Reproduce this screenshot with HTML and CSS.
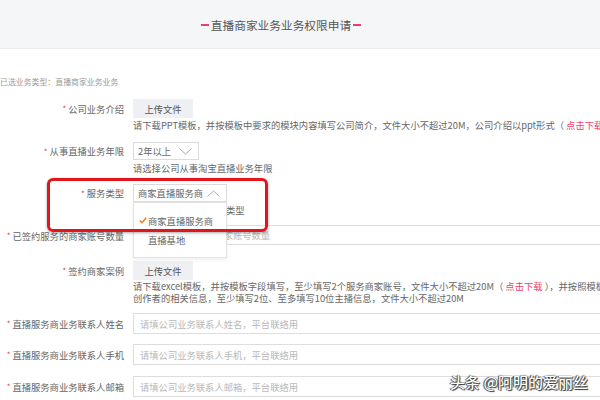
FILE: index.html
```html
<!DOCTYPE html>
<html lang="zh-CN">
<head>
    <meta charset="UTF-8">
    <meta name="viewport" content="width=device-width, initial-scale=1.0">
    <title>直播商家业务业务权限申请</title>
    <link rel="stylesheet" href="styles.css">
</head>
<body>

<div class="page">
    <div class="top">
        <h1 class="title"><span class="dash"></span>直播商家业务业务权限申请<span class="dash"></span></h1>
    </div>

    <p class="picked">已选业务类型：直播商家业务业务</p>

    <form class="form">
        <!-- 公司业务介绍 -->
        <div class="row row-intro">
            <label class="label"><i>*</i>公司业务介绍</label>
            <div class="field">
                <button type="button" class="upload">上传文件</button>
                <p class="tip">请下载PPT模板，并按模板中要求的模块内容填写公司简介，文件大小不超过20M，公司介绍以ppt形式（ <a class="link">点击下载</a> ）</p>
            </div>
        </div>

        <!-- 从事直播业务年限 -->
        <div class="row row-years">
            <label class="label"><i>*</i>从事直播业务年限</label>
            <div class="field">
                <div class="select select-years">
                    <span>2年以上</span>
                    <svg class="chev" width="13" height="7" viewBox="0 0 13 7"><polyline points="0.5,0.5 6.5,6 12.5,0.5" fill="none" stroke="#a8a8a8" stroke-width="1"/></svg>
                </div>
                <p class="tip">请选择公司从事淘宝直播业务年限</p>
            </div>
        </div>

        <!-- 服务类型 -->
        <div class="row row-type">
            <label class="label"><i>*</i>服务类型</label>
            <div class="field">
                <div class="select select-type">
                    <span>商家直播服务商</span>
                    <svg class="chev" width="13" height="7" viewBox="0 0 13 7"><polyline points="0.5,6.5 6.5,1 12.5,6.5" fill="none" stroke="#a8a8a8" stroke-width="1"/></svg>
                    <ul class="menu">
                        <li class="on">
                            <svg class="tick" width="8" height="7" viewBox="0 0 8 7"><polyline points="0.8,3.6 3,5.8 7.2,0.8" fill="none" stroke="#f5761a" stroke-width="1.4"/></svg>商家直播服务商
                        </li>
                        <li>直播基地</li>
                    </ul>
                </div>
                <p class="tip">请选择公司申请的服务类型</p>
            </div>
        </div>

        <!-- 已签约服务的商家账号数量 -->
        <div class="row row-count">
            <label class="label"><i>*</i>已签约服务的商家账号数量</label>
            <div class="field">
                <input class="input" type="text" placeholder="请填写签约服务的商家账号数量">
            </div>
        </div>

        <!-- 签约商家案例 -->
        <div class="row row-case">
            <label class="label"><i>*</i>签约商家案例</label>
            <div class="field">
                <button type="button" class="upload">上传文件</button>
                <p class="tip">请下载excel模板，并按模板字段填写，至少填写2个服务商家账号，文件大小不超过20M（ <a class="link">点击下载</a> ），并按照模板填写签约<br>创作者的相关信息，至少填写2位、至多填写10位主播信息，文件大小不超过20M</p>
            </div>
        </div>

        <div class="row row-name">
            <label class="label"><i>*</i>直播服务商业务联系人姓名</label>
            <div class="field">
                <input class="input" type="text" placeholder="请填公司业务联系人姓名，平台联络用">
            </div>
        </div>

        <div class="row row-phone">
            <label class="label"><i>*</i>直播服务商业务联系人手机</label>
            <div class="field">
                <input class="input" type="text" placeholder="请填公司业务联系人手机，平台联络用">
            </div>
        </div>

        <div class="row row-mail">
            <label class="label"><i>*</i>直播服务商业务联系人邮箱</label>
            <div class="field">
                <input class="input" type="text" placeholder="请填公司业务联系人邮箱，平台联络用">
            </div>
        </div>
    </form>

    <!-- 红框标注 -->
    <div class="mark"></div>

    <div class="watermark">头条 @阿明的爱丽丝</div>
</div>

</body>
</html>
```

FILE: styles.css
```css
html, body {
    margin: 0;
    padding: 0;
    background: #fff;
    overflow: hidden;
}
body {
    font-family: "Noto Sans CJK SC", "Microsoft YaHei", sans-serif;
    color: #666;
}
.page {
    position: relative;
    width: 600px;
    height: 400px;
    overflow: hidden;
}

/* 顶部标题 */
.top {
    height: 48px;
    background: #f5f6f8;
    border-bottom: 1px solid #ececec;
    display: flex;
    align-items: center;
    justify-content: center;
    padding-right: 38px;
}
.title {
    margin: 0;
    font-size: 11.7px;
    font-weight: normal;
    color: #555;
    display: flex;
    align-items: center;
    padding-top: 1px;
}
.dash {
    display: inline-block;
    width: 8px;
    height: 2px;
    background: #ec3e6d;
    margin: 0 2px;
}

.picked {
    margin: 27px 0 0 0;
    font-size: 7.9px;
    line-height: 12px;
    color: #999;
    white-space: nowrap;
}

/* 表单 */
.form {
    margin: 0;
}
.row {
    display: grid;
    grid-template-columns: 124px 480px;
    column-gap: 9px;
    align-items: start;
}
.row-intro { margin-top: 11px; }
.row-years { margin-top: 11px; }
.row-type { margin-top: 10px; }
.row-count { margin-top: 9px; }
.row-case { margin-top: 15px; }
.row-name { margin-top: 9px; }
.row-phone { margin-top: 10px; }
.row-mail { margin-top: 11px; }

.label {
    height: 19px;
    display: flex;
    align-items: center;
    justify-content: flex-end;
    white-space: nowrap;
    font-size: 9.3px;
    color: #666;
}
.label i {
    font-style: normal;
    color: #e4393c;
    font-size: 8px;
    margin-right: 2px;
}
.row-count .label,
.row-name .label,
.row-phone .label,
.row-mail .label {
    height: 21px;
}
.row-years .label,
.row-type .label {
    height: 18px;
}

.field {
    position: relative;
}
.upload {
    display: block;
    width: 60px;
    height: 19px;
    border: none;
    background: #eef0f3;
    font-family: inherit;
    font-size: 9.3px;
    color: #555;
    padding: 0;
}
.tip {
    margin: 0;
    font-size: 9.3px;
    line-height: 12px;
    color: #666;
    white-space: nowrap;
}
.row-intro .tip { margin-top: 1px; }
.row-years .tip,
.row-type .tip { margin-top: 2px; }
.row-case .tip { margin-top: 0; }
.link {
    color: #f0416e;
}

.select {
    position: relative;
    box-sizing: border-box;
    height: 18px;
    border: 1px solid #dcdcdc;
    display: flex;
    align-items: center;
    justify-content: space-between;
    padding: 0 6px 0 4px;
    font-size: 9.3px;
    color: #666;
    background: #fff;
}
.select-years { width: 66px; }
.select-type { width: 94px; }
.chev {
    display: block;
}

.menu {
    position: absolute;
    top: 17px;
    left: -1px;
    width: 94px;
    height: 56px;
    box-sizing: border-box;
    margin: 0;
    padding: 8px 0 0 0;
    list-style: none;
    background: #fff;
    border: 1px solid #e2e2e2;
    box-shadow: 0 2px 4px rgba(0, 0, 0, 0.06);
    z-index: 2;
}
.menu li {
    height: 19px;
    display: flex;
    align-items: center;
    padding-left: 14px;
    font-size: 9.3px;
    color: #666;
    white-space: nowrap;
}
.menu li.on {
    padding-left: 5px;
}
.tick {
    margin-right: 1px;
}

.input {
    display: block;
    box-sizing: border-box;
    width: 100%;
    height: 21px;
    border: 1px solid #dedede;
    padding: 0 6px;
    font-family: inherit;
    font-size: 9.3px;
    color: #666;
    outline: none;
}
.row-count .input { height: 20px; }
.input::placeholder {
    color: #b8b8b8;
}

/* 红框 */
.mark {
    position: absolute;
    left: 47px;
    top: 178px;
    width: 221px;
    height: 54px;
    box-sizing: border-box;
    border: 3px solid #e2151c;
    border-radius: 6px;
    box-shadow: 0 1px 3px rgba(0, 0, 0, 0.35);
    z-index: 3;
}

.watermark {
    position: absolute;
    right: 12px;
    bottom: 8px;
    font-size: 15px;
    line-height: 20px;
    color: #fff;
    font-weight: 500;
    text-shadow: 0 0 1px #222, 1px 1px 1px #333, -1px 0 1px #444;
    white-space: nowrap;
    z-index: 4;
}
```
